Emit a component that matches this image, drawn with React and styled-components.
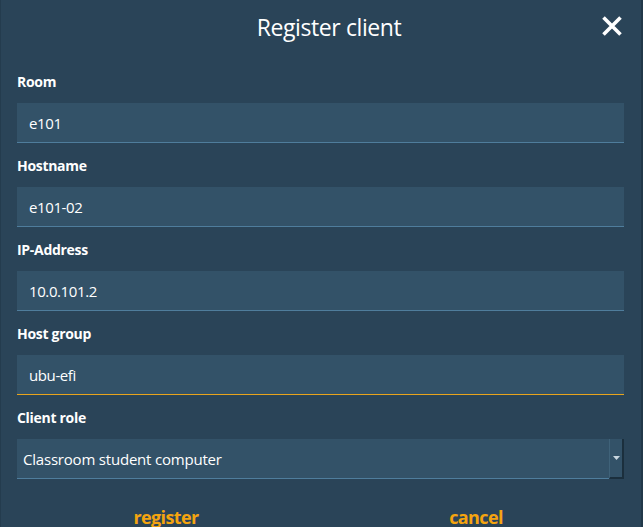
import styled, { createGlobalStyle } from 'styled-components'
import { useState } from 'react'

const GlobalStyle = createGlobalStyle`
  html, body {
    margin: 0;
    padding: 0;
    background: #2a4458;
  }
  * {
    box-sizing: border-box;
  }
`

const fields = [
  { name: 'room', label: 'Room', value: 'e101' },
  { name: 'hostname', label: 'Hostname', value: 'e101-02' },
  { name: 'ip', label: 'IP-Address', value: '10.0.101.2' },
  { name: 'hostgroup', label: 'Host group', value: 'ubu-efi', focused: true },
]

export default function App() {
  const [values, setValues] = useState(
    Object.fromEntries(fields.map(f => [f.name, f.value]))
  )

  const handleChange = ({ target }) => {
    setValues({ ...values, [target.name]: target.value })
  }

  return (
    <>
      <GlobalStyle />
      <Dialog>
        <Header>
          <Title>Register client</Title>
          <CloseButton aria-label="close">
            <svg width="22" height="22" viewBox="0 0 22 22">
              <path d="M2.5 2.5 L19.5 19.5 M19.5 2.5 L2.5 19.5" stroke="#fff" strokeWidth="3.6" />
            </svg>
          </CloseButton>
        </Header>
        <Form autoComplete="off">
          {fields.map(f => (
            <Field key={f.name}>
              <Label>{f.label}</Label>
              <Input
                name={f.name}
                value={values[f.name]}
                onChange={handleChange}
                $focused={!!f.focused}
              />
            </Field>
          ))}
          <Field>
            <Label>Client role</Label>
            <SelectBox>
              <SelectValue>Classroom student computer</SelectValue>
              <SelectArrow>
                <svg width="7" height="4" viewBox="0 0 7 4">
                  <path d="M0 0 H7 L3.5 4 Z" fill="#c9d6df" />
                </svg>
              </SelectArrow>
            </SelectBox>
          </Field>
        </Form>
        <Actions>
          <ActionButton>register</ActionButton>
          <ActionButton>cancel</ActionButton>
        </Actions>
      </Dialog>
    </>
  )
}

const Dialog = styled.div`
  height: 527px;
  overflow: hidden;
  background: #2a4458;
  border-left: 1px solid #243c4e;
  border-right: 2px solid #213849;
  font-family: 'Open Sans', 'Noto Sans', sans-serif;
  color: #fff;
`

const Header = styled.div`
  position: relative;
  height: 54px;
  padding-left: 16px;
  display: flex;
  align-items: center;
  justify-content: center;
`

const Title = styled.h1`
  margin: 0;
  font-size: 23px;
  font-weight: 400;
  letter-spacing: -0.4px;
  color: #fff;
`

const CloseButton = styled.button`
  position: absolute;
  right: 18px;
  top: 15px;
  padding: 0;
  border: none;
  background: none;
  display: flex;
  cursor: pointer;
`

const Form = styled.form`
  display: flex;
  flex-direction: column;
  gap: 14px;
  padding: 19px 17px 0 16px;
`

const Field = styled.div`
  display: flex;
  flex-direction: column;
  gap: 12px;
`

const Label = styled.label`
  font-size: 14px;
  font-weight: 700;
  letter-spacing: -0.3px;
  line-height: 18px;
  color: #fff;
`

const Input = styled.input`
  height: 40px;
  width: 100%;
  padding: 0 12px;
  border: none;
  border-bottom: 1px solid ${p => (p.$focused ? '#e8a41c' : '#4f7d9c')};
  background: #335268;
  color: #fff;
  font-family: 'Open Sans', 'Noto Sans', sans-serif;
  font-size: 15px;
  letter-spacing: -0.4px;
  outline: none;
`

const SelectBox = styled.div`
  height: 40px;
  display: flex;
  align-items: stretch;
  background: #335268;
  border-bottom: 1px solid #4f7d9c;
`

const SelectValue = styled.div`
  flex: 1;
  display: flex;
  align-items: center;
  padding-left: 6px;
  font-size: 15px;
  letter-spacing: -0.2px;
  color: #fff;
`

const SelectArrow = styled.div`
  width: 15px;
  display: flex;
  align-items: center;
  justify-content: center;
  background: #335268;
  border-left: 1px solid #3f6279;
  border-right: 2px solid #1b2f3d;
  border-bottom: 2px solid #1b2f3d;
  margin-bottom: -1px;
`

const Actions = styled.div`
  display: grid;
  grid-template-columns: 1fr 1fr;
  padding: 26px 10px 0 10px;
`

const ActionButton = styled.button`
  justify-self: center;
  border: none;
  background: none;
  padding: 0;
  color: #f5a40f;
  font-family: 'Open Sans', 'Noto Sans', sans-serif;
  font-size: 18px;
  font-weight: 700;
  letter-spacing: -0.6px;
  cursor: pointer;
`
